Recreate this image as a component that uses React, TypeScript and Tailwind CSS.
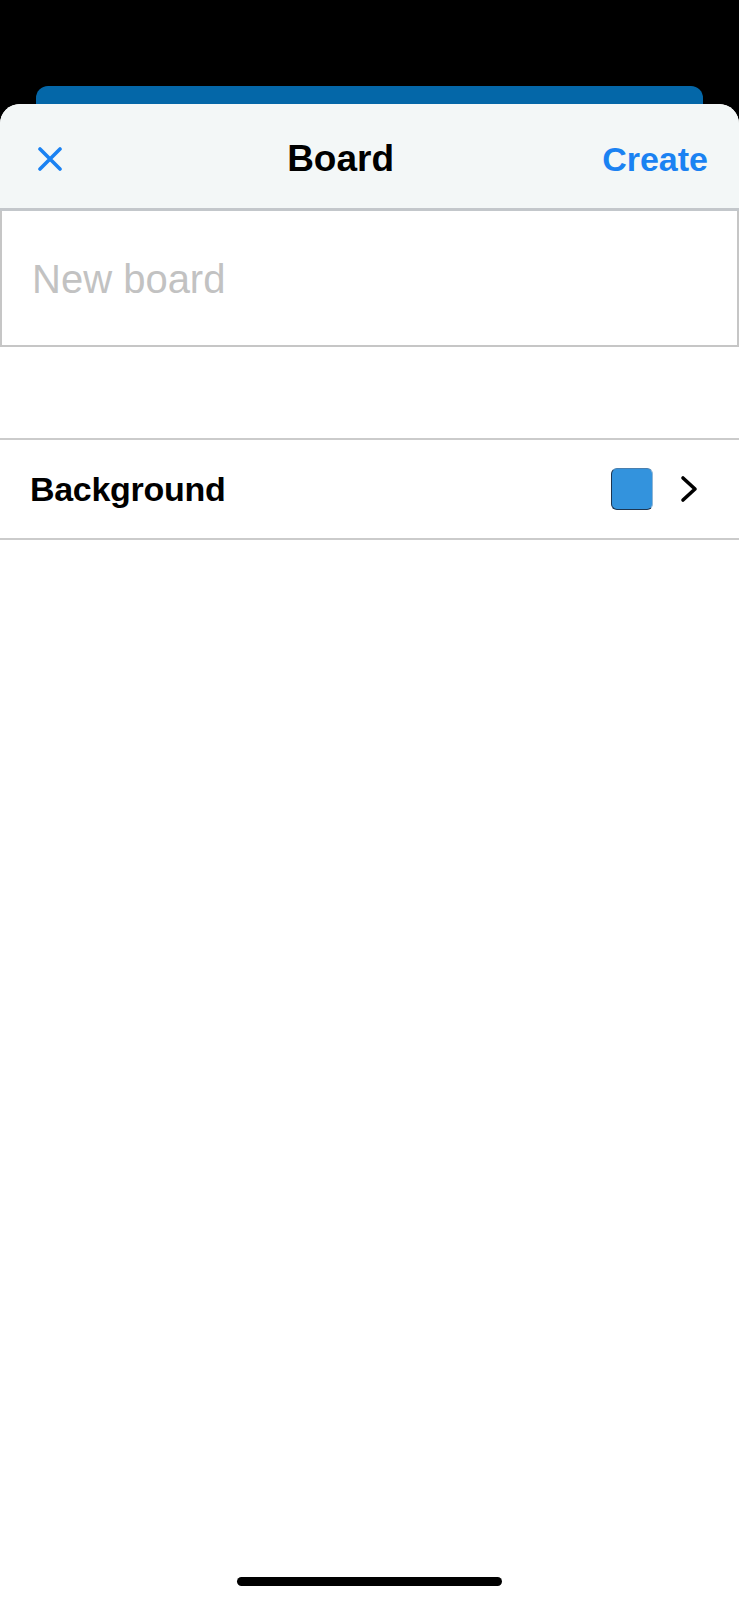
import React from "react";

const CloseIcon = () => (
  <svg width="26" height="24" viewBox="0 0 26 24" fill="none">
    <path
      d="M3 2 L23 22 M23 2 L3 22"
      stroke="#1a82f2"
      strokeWidth="3.6"
      strokeLinecap="round"
    />
  </svg>
);

const Chevron = () => (
  <svg width="18" height="28" viewBox="0 0 18 28" fill="none">
    <polyline
      points="3,3 15,14 3,25"
      stroke="#000"
      strokeWidth="3.6"
      strokeLinecap="round"
      strokeLinejoin="round"
    />
  </svg>
);

const App = () => {
  return (
    <div
      className="w-full min-h-screen bg-black flex flex-col"
      style={{ fontFamily: '"Liberation Sans", Arial, sans-serif' }}
    >
      {/* card peeking behind the sheet */}
      <div className="pt-[86px] px-[36px]">
        <div className="h-[18px] rounded-t-[12px] bg-[#0467a8]"></div>
      </div>

      <div className="flex-1 flex flex-col bg-white rounded-t-[20px] overflow-hidden">
        <div className="h-[107px] pt-[6px] bg-[#f3f7f7] border-b-[3px] border-[#c3c7cb] flex items-center pl-[37px] pr-[31px]">
          <button className="w-[26px] flex items-center">
            <CloseIcon />
          </button>
          <div className="flex-1 text-center pl-[16px] text-[37px] font-bold text-black">
            Board
          </div>
          <button className="text-[34px] font-bold text-[#1a82f2]">
            Create
          </button>
        </div>

        <div className="h-[136px] border-2 border-t-0 border-[#c6c6c6] flex items-center">
          <input
            type="text"
            placeholder="New board"
            className="w-full h-full px-[30px] pt-[2px] text-[40px] text-black placeholder:text-[#c2c2c2] outline-none bg-transparent"
          />
        </div>

        <div className="h-[91px]"></div>

        <div className="h-[102px] border-y-2 border-[#cbcbcb] flex items-center pl-[30px] pr-[41px]">
          <div className="flex-1 text-[34px] font-bold text-black tracking-[-0.3px]">
            Background
          </div>
          <div className="w-[42px] h-[42px] rounded-[6px] bg-[#3393dd] border-[1.5px] border-[#1d3550] border-t-[#4a7fae] border-r-[#8fb6d6]"></div>
          <div className="ml-[27px] flex items-center">
            <Chevron />
          </div>
        </div>

        <div className="flex-1"></div>

        <div className="flex justify-center pb-[14px]">
          <div className="w-[265px] h-[9px] rounded-full bg-black"></div>
        </div>
      </div>
    </div>
  );
};

export default App;
